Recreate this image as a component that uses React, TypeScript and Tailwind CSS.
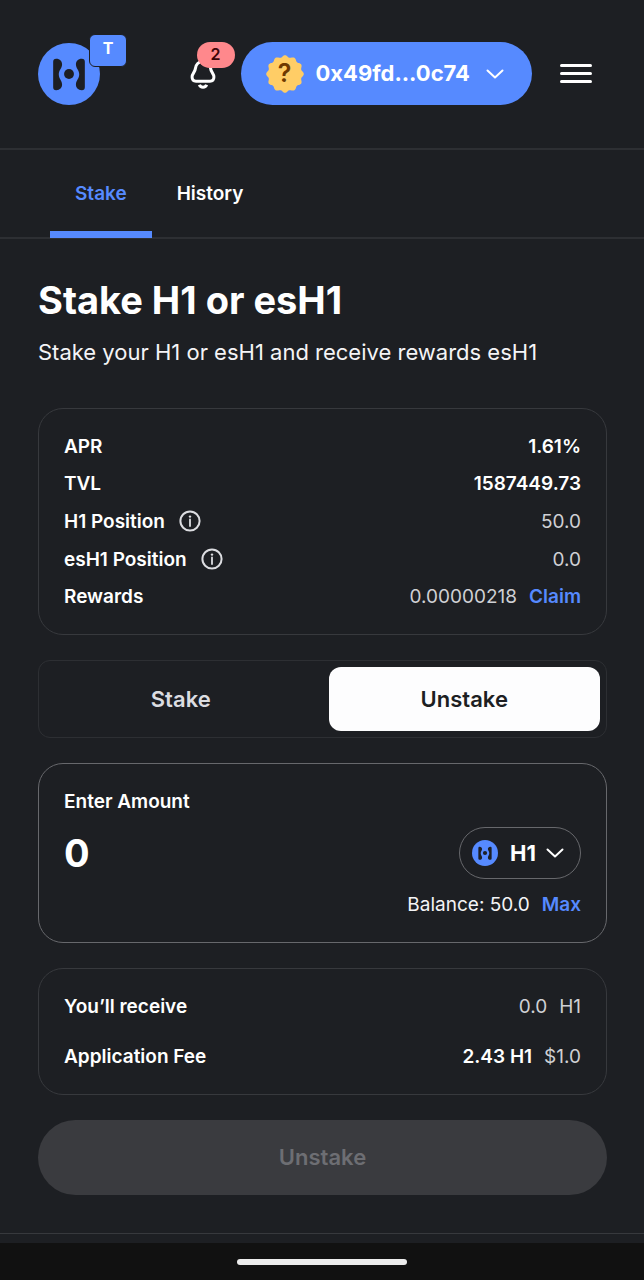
import { ReactNode, useState } from "react";

interface RowProps {
  label: string;
  info?: boolean;
  children: ReactNode;
}

const LogoIcon = ({ className }: { className?: string }) => (
  <svg viewBox="0 0 188 188" className={className} aria-hidden="true">
    <circle cx="94" cy="94" r="94" fill="#568aff" />
    <g fill="#1d1f23">
      <path d="M46 57Q46 48 55 48C67 48 73 56 73 65C73 77 63 81 63 95C63 109 73 114 73 126C73 135 67 143 55 143Q46 143 46 134Z" />
      <path d="M142 57Q142 48 133 48C121 48 115 56 115 65C115 77 125 81 125 95C125 109 115 114 115 126C115 135 121 143 133 143Q142 143 142 134Z" />
      <circle cx="94" cy="94" r="15" />
    </g>
  </svg>
);

const BellIcon = () => (
  <svg
    viewBox="0 0 28 32"
    className="h-8 w-7"
    fill="none"
    stroke="#fff"
    strokeWidth="3"
    strokeLinejoin="round"
    aria-hidden="true"
  >
    <path d="M13 3.500C8.500 3.500 5.800 6.500 5.400 10.500C5.100 14 2.100 15.500 2.100 19C2.100 21.700 3.600 23.200 6 23.200H20C22.400 23.200 23.900 21.700 23.900 19C23.900 15.500 20.900 14 20.600 10.500C20.200 6.500 17.500 3.500 13 3.500Z" />
    <path d="M9.400 26.800C10.400 30 15.600 30 16.600 26.800" />
  </svg>
);

const ChevronIcon = ({ className }: { className?: string }) => (
  <svg
    viewBox="0 0 18 10"
    className={className}
    fill="none"
    stroke="#fff"
    strokeWidth="2"
    strokeLinecap="round"
    strokeLinejoin="round"
    aria-hidden="true"
  >
    <path d="M1.500 1.500L9 8.500L16.500 1.500" />
  </svg>
);

const InfoIcon = () => (
  <svg
    viewBox="0 0 26 26"
    className="size-[26px]"
    fill="none"
    stroke="#dcdde1"
    aria-hidden="true"
  >
    <circle cx="13" cy="13" r="9.600" strokeWidth="2" />
    <path d="M13 11.500V18" strokeWidth="1.800" strokeLinecap="round" />
    <circle cx="13" cy="8.600" r="1.200" fill="#dcdde1" stroke="none" />
  </svg>
);

// twelve soft scallops around the rim
const sealPoints = Array.from({ length: 180 }, (_, i) => {
  const angle = (i * Math.PI) / 90;
  const radius = 17.8 + Math.cos(12 * angle);
  const x = 19 + radius * Math.sin(angle);
  const y = 19 - radius * Math.cos(angle);
  return `${x.toFixed(2)},${y.toFixed(2)}`;
}).join(" ");

const SealIcon = () => (
  <span className="grid size-[38px] place-items-center">
    <svg
      viewBox="0 0 38 38"
      className="col-start-1 row-start-1 size-full"
      aria-hidden="true"
    >
      <polygon points={sealPoints} fill="#ffcd66" />
    </svg>
    <span className="col-start-1 row-start-1 text-[25px] font-semibold leading-none text-[#6f3900]">
      ?
    </span>
  </span>
);

const Row = ({ label, info, children }: RowProps) => (
  <div className="flex items-center justify-between">
    <dt className="flex items-center gap-3 font-semibold text-white">
      {label}
      {info && <InfoIcon />}
    </dt>
    <dd className="flex items-center gap-3 text-[#cfd0d4]">{children}</dd>
  </div>
);

const Header = () => (
  <header className="flex items-center justify-between border-b-2 border-[#2d2f33] pt-[42px] pr-[52px] pb-[43px] pl-[38px]">
    <a href="#home" aria-label="Home" className="relative">
      <LogoIcon className="size-[62px]" />
      <span className="absolute -top-[9px] left-[51px] flex h-[33px] w-[38px] items-center justify-center rounded-md border border-[#1d1f23] bg-[#568aff] pb-1 text-base font-bold text-white">
        T
      </span>
    </a>
    <div className="flex items-center">
      <button aria-label="Notifications" className="relative mr-[23px]">
        <BellIcon />
        <span className="absolute -top-4 left-[7px] flex h-[26px] w-[38px] items-center justify-center rounded-full bg-[#ff888c] pb-0.5 text-base font-semibold text-[#3d0508]">
          2
        </span>
      </button>
      <button className="mr-7 flex h-[63px] items-center gap-3 rounded-full bg-[#568aff] pr-7 pl-[25px] text-[22px] font-bold text-white">
        <SealIcon />
        0x49fd...0c74
        <ChevronIcon className="ml-1 w-[18px]" />
      </button>
      <button aria-label="Menu" className="flex flex-col gap-[5px]">
        <span className="h-[3px] w-8 rounded-full bg-white" />
        <span className="h-[3px] w-8 rounded-full bg-white" />
        <span className="h-[3px] w-8 rounded-full bg-white" />
      </button>
    </div>
  </header>
);

export default function App() {
  const [mode, setMode] = useState("unstake");
  const [amount, setAmount] = useState("0");

  const modeClass = (active: boolean) =>
    active ? "bg-[#fdfdfe] text-[#1d1f23]" : "text-[#dcdde1]";

  return (
    <div className="flex min-h-screen flex-col bg-[#1d1f23] font-['Inter',sans-serif] text-[19px] leading-[25px] text-white">
      <Header />

      <nav className="flex border-b-2 border-[#2d2f33] px-[50px] font-semibold">
        <a
          href="#stake"
          aria-current="page"
          className="-mb-px border-b-[7px] border-[#568aff] px-[25px] pt-[31px] pb-[25px] text-[#568aff]"
        >
          Stake
        </a>
        <a href="#history" className="px-[25px] pt-[31px]">
          History
        </a>
      </nav>

      <main className="flex-1 pt-[37px] pr-[37px] pb-[38px] pl-[38px]">
        <h1 className="text-[38px] font-bold leading-[48px]">
          Stake H1 or esH1
        </h1>
        <p className="mt-3 text-[22px] leading-8 text-[#f4f4f6]">
          Stake your H1 or esH1 and receive rewards esH1
        </p>

        <div className="mt-10 flex flex-col gap-[25px]">
          <dl className="flex flex-col gap-3 rounded-[25px] border border-[#37393d] p-[25px]">
            <Row label="APR">
              <span className="font-semibold text-white">1.61%</span>
            </Row>
            <Row label="TVL">
              <span className="font-semibold text-white">1587449.73</span>
            </Row>
            <Row label="H1 Position" info>
              50.0
            </Row>
            <Row label="esH1 Position" info>
              0.0
            </Row>
            <Row label="Rewards">
              0.00000218
              <button className="font-semibold text-[#568aff]">Claim</button>
            </Row>
          </dl>

          <div className="grid grid-cols-2 gap-3 rounded-xl border border-[#2d2f33] p-1.5 text-[22px] font-semibold">
            <button
              onClick={() => setMode("stake")}
              className={`h-16 rounded-xl ${modeClass(mode === "stake")}`}
            >
              Stake
            </button>
            <button
              onClick={() => setMode("unstake")}
              className={`h-16 rounded-xl ${modeClass(mode === "unstake")}`}
            >
              Unstake
            </button>
          </div>

          <section className="flex flex-col gap-[13px] rounded-[25px] border border-[#67686c] p-[25px]">
            <label htmlFor="amount" className="font-semibold">
              Enter Amount
            </label>
            <div className="flex items-center justify-between">
              <input
                id="amount"
                inputMode="decimal"
                value={amount}
                onChange={(e) => setAmount(e.target.value)}
                className="h-[52px] min-w-0 flex-1 bg-transparent text-[38px] font-bold outline-none"
              />
              <label className="flex h-[52px] items-center rounded-full border border-[#67686c] pr-4 pl-3">
                <LogoIcon className="size-[26px]" />
                <select
                  aria-label="Token"
                  className="ml-3 appearance-none bg-transparent text-[22px] font-bold outline-none"
                >
                  <option>H1</option>
                </select>
                <ChevronIcon className="ml-2.5 w-[18px]" />
              </label>
            </div>
            <div className="flex justify-end gap-3">
              <span className="text-[#f4f4f6]">Balance: 50.0</span>
              <button
                onClick={() => setAmount("50.0")}
                className="font-semibold text-[#568aff]"
              >
                Max
              </button>
            </div>
          </section>

          <dl className="flex flex-col gap-[25px] rounded-[25px] border border-[#37393d] p-[25px]">
            <Row label="You’ll receive">
              <span>0.0</span>
              <span>H1</span>
            </Row>
            <Row label="Application Fee">
              <span className="font-semibold text-white">2.43 H1</span>
              <span>$1.0</span>
            </Row>
          </dl>

          <button
            disabled
            className="h-[75px] rounded-full bg-[#3a3b3f] text-[22px] font-semibold text-[#6d6e73]"
          >
            Unstake
          </button>
        </div>
      </main>

      <footer className="border-t border-[#37393d] pt-[9px]">
        <div className="flex h-[37px] items-center justify-center bg-[#111111]">
          <div className="h-1.5 w-[170px] rounded-full bg-[#ececec]" />
        </div>
      </footer>
    </div>
  );
}
